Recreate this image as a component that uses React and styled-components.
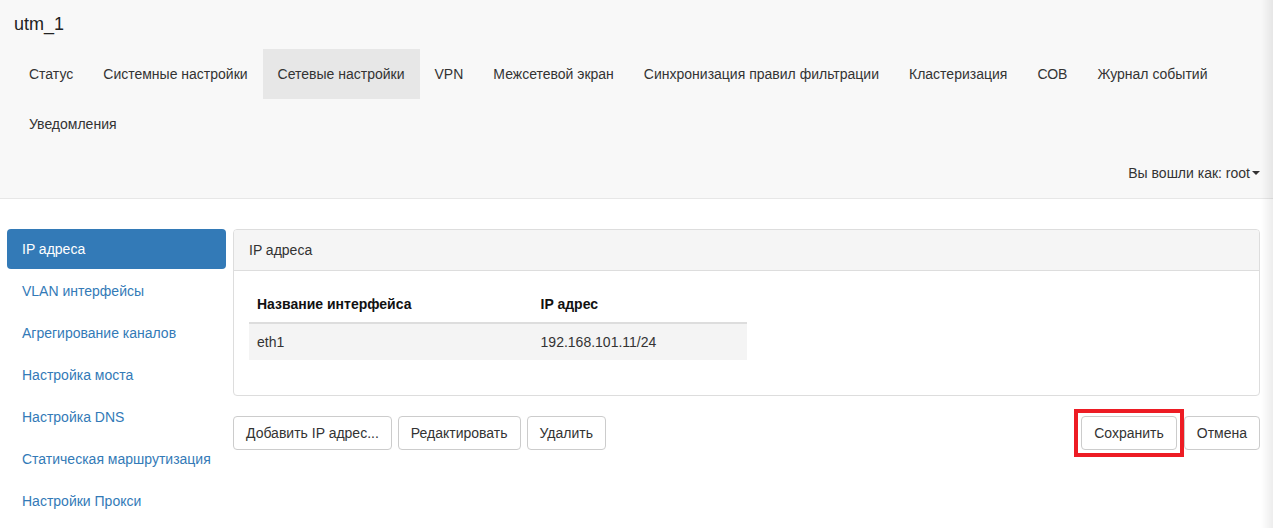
import React from 'react';
import styled, { createGlobalStyle } from 'styled-components';

const GlobalStyle = createGlobalStyle`
  html, body {
    margin: 0;
    padding: 0;
    background: #fff;
    font-family: 'Liberation Sans', Arial, sans-serif;
    font-size: 14px;
    line-height: 20px;
    color: #333;
  }

  body::after {
    content: '';
    position: fixed;
    top: 0;
    right: 0;
    bottom: 0;
    width: 12px;
    background: linear-gradient(90deg, rgba(0, 0, 0, 0), rgba(0, 0, 0, 0.07));
    pointer-events: none;
  }
`;

const topItems = [
  'Статус',
  'Системные настройки',
  'Сетевые настройки',
  'VPN',
  'Межсетевой экран',
  'Синхронизация правил фильтрации',
  'Кластеризация',
  'СОВ',
  'Журнал событий',
  'Уведомления',
];

const sideItems = [
  'IP адреса',
  'VLAN интерфейсы',
  'Агрегирование каналов',
  'Настройка моста',
  'Настройка DNS',
  'Статическая маршрутизация',
  'Настройки Прокси',
];

const App = () => (
  <>
    <GlobalStyle />
    <Navbar>
      <Brand>utm_1</Brand>
      <TopNav>
        {topItems.map((item) => (
          <TopLink key={item} $active={item === 'Сетевые настройки'}>
            {item}
          </TopLink>
        ))}
      </TopNav>
      <UserRow>
        Вы вошли как: root
        <Caret />
      </UserRow>
    </Navbar>

    <Main>
      <Sidebar>
        {sideItems.map((item, i) => (
          <Pill key={item} $active={i === 0}>
            {item}
          </Pill>
        ))}
      </Sidebar>

      <Content>
        <Panel>
          <PanelHeading>IP адреса</PanelHeading>
          <PanelBody>
            <Table>
              <thead>
                <tr>
                  <Th $width="57%">Название интерфейса</Th>
                  <Th>IP адрес</Th>
                </tr>
              </thead>
              <tbody>
                <tr>
                  <Td>eth1</Td>
                  <Td>192.168.101.11/24</Td>
                </tr>
              </tbody>
            </Table>
          </PanelBody>
        </Panel>

        <Actions>
          <ButtonGroup>
            <Button>Добавить IP адрес...</Button>
            <Button>Редактировать</Button>
            <Button>Удалить</Button>
          </ButtonGroup>
          <ButtonGroup>
            <Button $highlight>Сохранить</Button>
            <Button>Отмена</Button>
          </ButtonGroup>
        </Actions>
      </Content>
    </Main>
  </>
);

const Navbar = styled.div`
  background: #f8f8f8;
  border-bottom: 1px solid #e7e7e7;
  height: 198px;
  display: flex;
  flex-direction: column;
`;

const Brand = styled.div`
  height: 49px;
  padding: 14px 14px 0;
  box-sizing: border-box;
  font-size: 18px;
  line-height: 20px;
  color: #222;
`;

const TopNav = styled.div`
  display: flex;
  flex-wrap: wrap;
  padding: 0 14px;
`;

const TopLink = styled.div`
  padding: 15px;
  line-height: 20px;
  color: #333;
  background: ${({ $active }) => ($active ? '#e7e7e7' : 'transparent')};
  cursor: pointer;
`;

const UserRow = styled.div`
  display: flex;
  align-items: center;
  justify-content: flex-end;
  height: 50px;
  padding: 0 13px;
  color: #333;
`;

const Caret = styled.span`
  display: inline-block;
  width: 0;
  height: 0;
  margin-left: 2px;
  border-top: 4px solid #333;
  border-left: 4px solid transparent;
  border-right: 4px solid transparent;
`;

const Main = styled.div`
  display: flex;
  gap: 7px;
  padding: 30px 13px 0 7px;
`;

const Sidebar = styled.div`
  width: 219px;
  flex-shrink: 0;
  display: flex;
  flex-direction: column;
  gap: 2px;
`;

const Pill = styled.div`
  padding: 10px 15px;
  border-radius: 4px;
  color: ${({ $active }) => ($active ? '#fff' : '#337ab7')};
  background: ${({ $active }) => ($active ? '#337ab7' : 'transparent')};
  cursor: pointer;
`;

const Content = styled.div`
  flex: 1;
  min-width: 0;
`;

const Panel = styled.div`
  border: 1px solid #ddd;
  border-radius: 4px;
  background: #fff;
  margin-bottom: 20px;
`;

const PanelHeading = styled.div`
  padding: 10px 15px;
  background: #f5f5f5;
  border-bottom: 1px solid #ddd;
  border-radius: 3px 3px 0 0;
  color: #333;
`;

const PanelBody = styled.div`
  padding: 15px;
`;

const Table = styled.table`
  width: 50%;
  border-collapse: collapse;
  margin-bottom: 20px;
`;

const Th = styled.th`
  width: ${({ $width }) => $width || 'auto'};
  text-align: left;
  font-weight: bold;
  padding: 8px;
  border-bottom: 2px solid #ddd;
  color: #111;
`;

const Td = styled.td`
  padding: 8px;
  background: #f4f4f4;
  color: #333;
`;

const Actions = styled.div`
  display: flex;
  justify-content: space-between;
`;

const ButtonGroup = styled.div`
  display: flex;
  gap: 6px;

  & + & {
    gap: 7px;
  }
`;

const Button = styled.button`
  position: relative;
  font-family: 'Liberation Sans', Arial, sans-serif;
  font-size: 14px;
  line-height: 20px;
  padding: 6px 12px;
  color: #333;
  background: #fff;
  border: 1px solid #ccc;
  border-radius: 4px;
  cursor: pointer;

  ${({ $highlight }) =>
    $highlight &&
    `
    &::after {
      content: '';
      position: absolute;
      top: -8px;
      left: -8px;
      right: -8px;
      bottom: -8px;
      border: 4px solid #ed1c24;
      pointer-events: none;
    }
  `}
`;

export default App;
